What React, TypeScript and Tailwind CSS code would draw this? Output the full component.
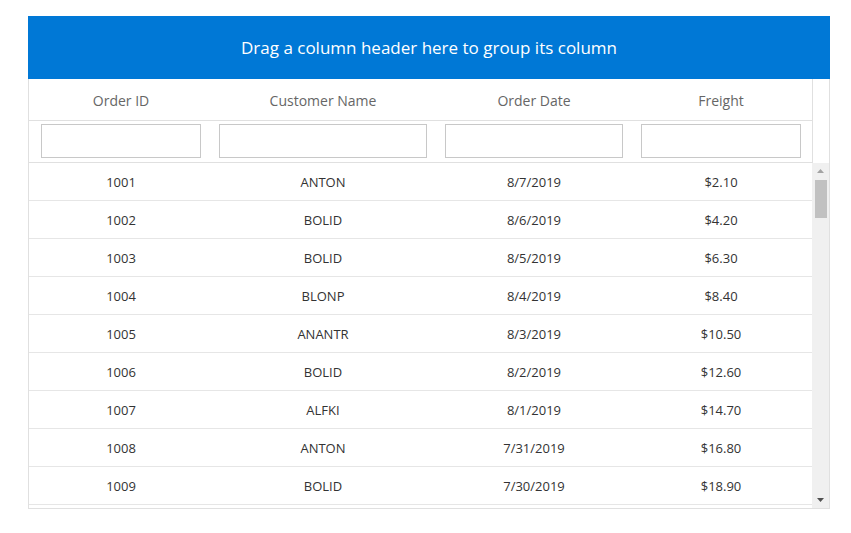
import React from "react";

const orders = [
  { id: 1001, name: "ANTON", date: "8/7/2019", freight: "$2.10" },
  { id: 1002, name: "BOLID", date: "8/6/2019", freight: "$4.20" },
  { id: 1003, name: "BOLID", date: "8/5/2019", freight: "$6.30" },
  { id: 1004, name: "BLONP", date: "8/4/2019", freight: "$8.40" },
  { id: 1005, name: "ANANTR", date: "8/3/2019", freight: "$10.50" },
  { id: 1006, name: "BOLID", date: "8/2/2019", freight: "$12.60" },
  { id: 1007, name: "ALFKI", date: "8/1/2019", freight: "$14.70" },
  { id: 1008, name: "ANTON", date: "7/31/2019", freight: "$16.80" },
  { id: 1009, name: "BOLID", date: "7/30/2019", freight: "$18.90" },
];

const cols = ["w-[178px]", "w-[226px]", "w-[196px]", "w-[178px]"];
const headers = ["Order ID", "Customer Name", "Order Date", "Freight"];

export default function App() {
  return (
    <div className="min-h-screen bg-white pt-4 pl-7 font-['Open_Sans',sans-serif]">
      <div className="w-[802px] border-x border-b border-[#e0e0e0]">
        {/* Group drop area */}
        <div className="-mx-px h-[63px] bg-[#0078d6] flex items-center justify-center text-white text-[17px]">
          Drag a column header here to group its column
        </div>

        {/* Header + filter bar */}
        <div className="flex pr-[16px]">
          <div className="w-[784px] border-r border-[#e0e0e0]">
            <div className="flex h-[42px] border-b border-[#e0e0e0] pt-[2px]">
              {headers.map((h, i) => (
                <div key={h} className={`${cols[i]} pl-3 pr-1.5 flex items-center justify-center text-[14px] text-[#666]`}>
                  {h}
                </div>
              ))}
            </div>
            <div className="flex h-[42px] border-b border-[#e0e0e0] items-start pt-[3px]">
              {headers.map((h, i) => (
                <div key={h} className={`${cols[i]} pl-3 pr-1.5`}>
                  <input className="w-full h-[34px] border border-[#c8c8c8] bg-white outline-none" />
                </div>
              ))}
            </div>
          </div>
        </div>

        {/* Rows + scrollbar */}
        <div className="flex h-[345px]">
          <div className="w-[783px] overflow-hidden">
            {orders.map((o) => (
              <div key={o.id} className="flex h-[38px] pt-[2px] border-b border-[#e6e6e6] text-[13px] text-[#333]">
                <div className={`${cols[0]} pl-3 pr-1.5 flex items-center justify-center`}>{o.id}</div>
                <div className={`${cols[1]} pl-3 pr-1.5 flex items-center justify-center`}>{o.name}</div>
                <div className={`${cols[2]} pl-3 pr-1.5 flex items-center justify-center`}>{o.date}</div>
                <div className={`${cols[3]} pl-3 pr-1.5 flex items-center justify-center`}>{o.freight}</div>
              </div>
            ))}
          </div>
          <div className="w-[17px] bg-[#f0f0f0] flex flex-col items-center">
            <svg width="9" height="17" viewBox="0 0 9 17" className="shrink-0">
              <path d="M1 10 L4.5 6 L8 10 Z" fill="#a3a3a3" />
            </svg>
            <div className="w-[12px] h-[38px] bg-[#c1c1c1]" />
            <div className="flex-1" />
            <svg width="9" height="17" viewBox="0 0 9 17" className="shrink-0">
              <path d="M1 7 L4.5 11 L8 7 Z" fill="#505050" />
            </svg>
          </div>
        </div>
      </div>
    </div>
  );
}
